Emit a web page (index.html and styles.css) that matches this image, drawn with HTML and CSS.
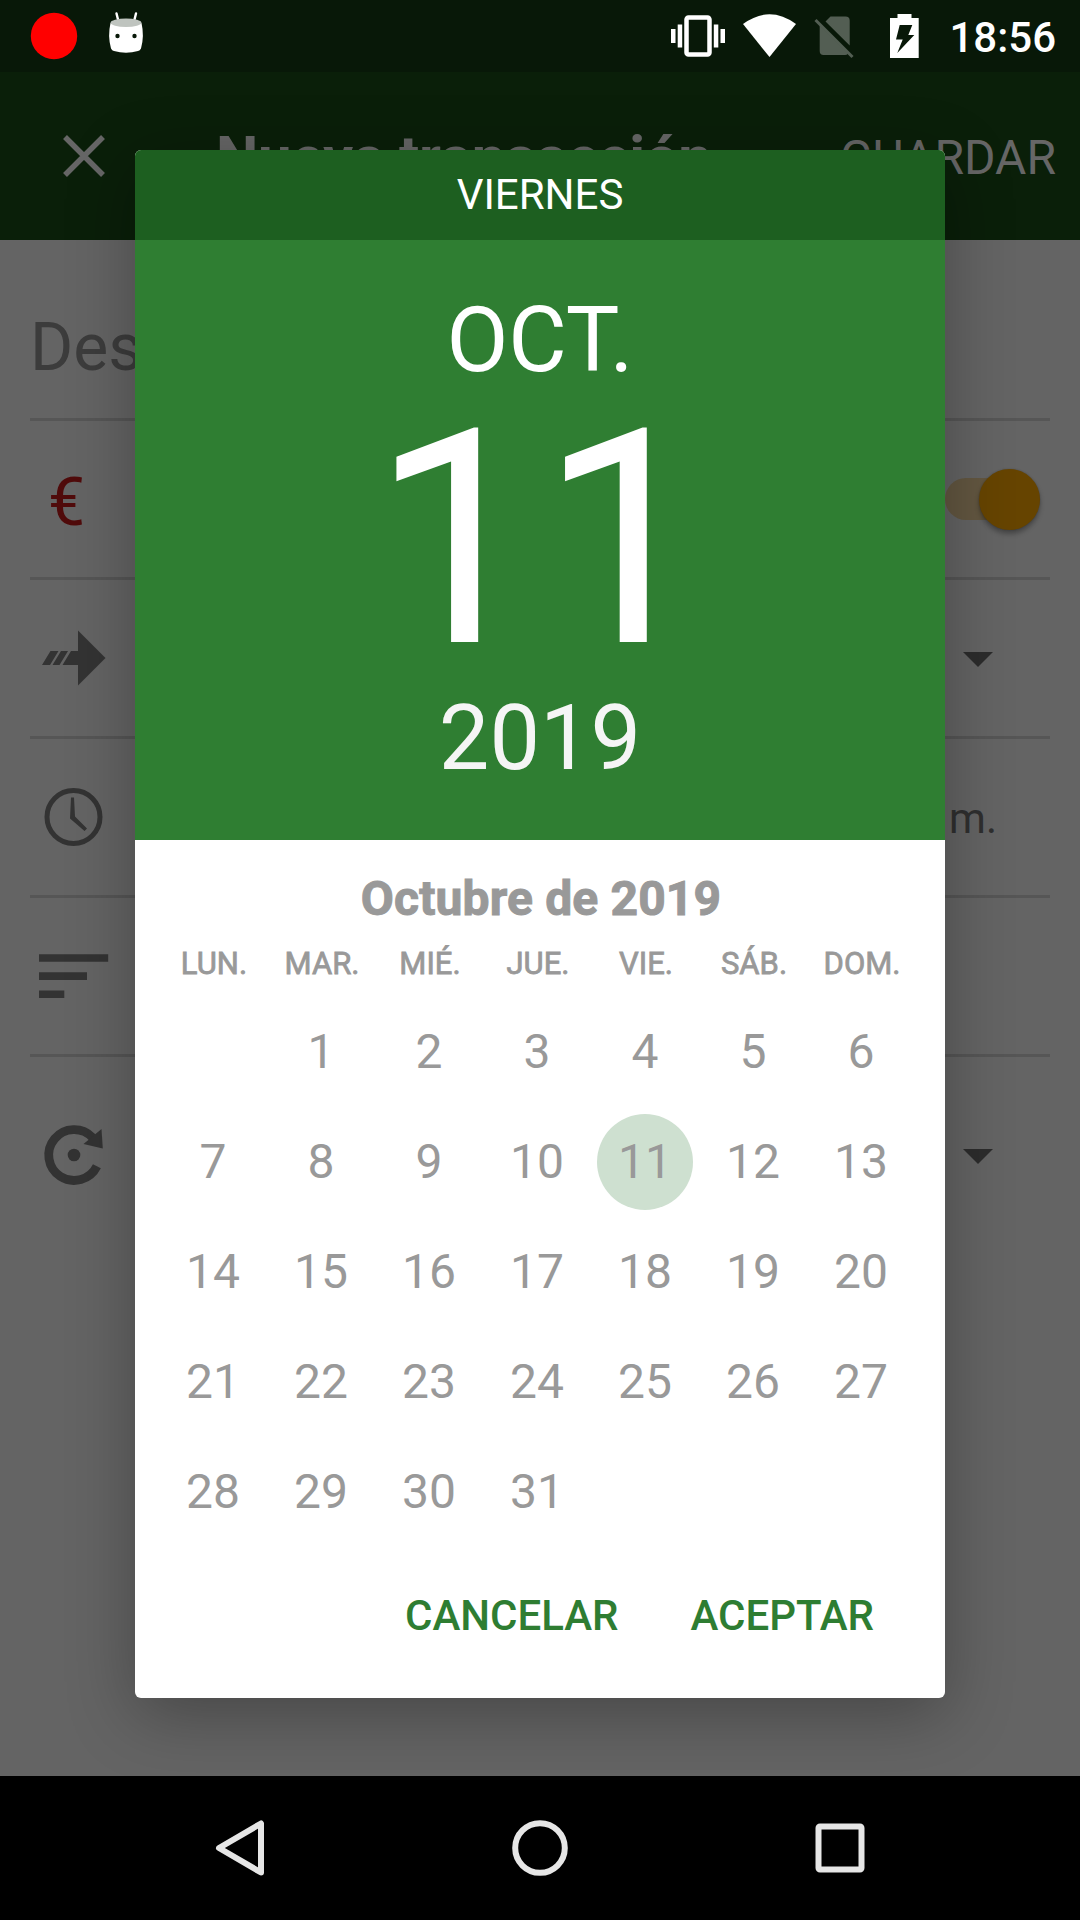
FILE: index.html
```html
<!DOCTYPE html>
<html lang="es">
<head>
<meta charset="utf-8">
<title>Nueva transacción</title>
<link rel="stylesheet" href="styles.css">
</head>
<body>
<div class="screen">
  <header class="status-bar">
    <svg class="status-left" viewBox="0 0 160 72">
      <circle cx="54" cy="36" r="23.2" fill="#f00"/>
      <path d="M116.500 13.500l2 8M136 13.500l-2 8" stroke="#fff" stroke-width="2.400" stroke-linecap="round"/>
      <path d="M110.500 23Q126 28 141.500 23Q144.500 36 141 48.500Q140 50.500 138 51Q126 54.500 114 51Q112 50.500 111 48.500Q107.500 36 110.500 23Z" fill="#fff"/>
      <ellipse cx="126" cy="22.700" rx="15.500" ry="4.200" fill="#bfc4bf"/>
      <circle cx="117.500" cy="36" r="2.200" fill="#081808"/>
      <circle cx="134.500" cy="36" r="2.200" fill="#081808"/>
    </svg>
    <svg class="status-right" viewBox="660 0 280 72">
      <rect x="686.500" y="17.500" width="23" height="37" rx="2" fill="none" stroke="#fff" stroke-width="4.500"/>
      <path d="M671 29h4.500v14h-4.500zM677.700 24.500h4.500v23h-4.500zM713.800 24.500h4.500v23h-4.500zM720.500 29h4.500v14h-4.500z" fill="#fff"/>
      <path d="M743 24Q769.500 4.500 796 24L769.500 57Z" fill="#fff"/>
      <path d="M830.500 16.500H845.500Q849.700 16.500 849.700 20.500V45.500L825.500 21.500ZM819.700 25.500L848 53.500Q847 55 845 55H823.500Q819.700 55 819.700 51Z" fill="#535e53"/>
      <path d="M815.500 20L852.500 57" stroke="#535e53" stroke-width="3"/>
      <path d="M897.500 14h14v4h7.200v40h-28.700v-40h7.500z" fill="#fff"/>
      <path d="M899.700 25H912.300L908.300 35H914.300L897.300 53L902.700 39.500H896Z" fill="#081808"/>
    </svg>
    <span class="status-time">18:56</span>
  </header>

  <div class="app-bar">
    <svg class="close" viewBox="0 0 44 44"><path d="M3 3L41 41M41 3L3 41" stroke="#666" stroke-width="5.500"/></svg>
    <h1 class="title">Nueva transacción</h1>
    <span class="save">GUARDAR</span>
  </div>

  <main class="form">
    <div class="row row-description">Descripción</div>
    <div class="row">
      <span class="euro">€</span>
      <span class="switch"><span class="thumb"></span></span>
    </div>
    <div class="row">
      <svg class="icon" viewBox="0 0 80 80"><path d="M48 12.500L75.500 40L48 67.500V47H32.500L41 33H48ZM20.500 33H28.500L20 47H12ZM31 33H38L29.500 47H22.500Z"/></svg>
      <svg class="caret" viewBox="0 0 30 15"><path d="M0 0H30L15 15Z"/></svg>
    </div>
    <div class="row">
      <svg class="icon" viewBox="0 0 80 80"><circle cx="43.500" cy="40" r="26.500" fill="none" stroke="#333" stroke-width="5"/><path d="M41 20.500H44L45 39.500L57 51.500L54.500 54L40 41.500Z"/></svg>
      <span class="time-value">p. m.</span>
    </div>
    <div class="row">
      <svg class="icon" viewBox="0 0 80 80"><path d="M9 18.300H78.200V25.800H9ZM9 36.300H57V44H9ZM9 54.500H34.300V62H9Z"/></svg>
    </div>
    <div class="row row-repeat">
      <svg class="icon" viewBox="0 0 80 80"><path d="M66.900 51.300A25.400 25.400 0 1 1 62.500 22.500" fill="none" stroke="#333" stroke-width="8.800"/><path d="M71.500 14L72.800 33.500L53.500 29Z"/><circle cx="44" cy="40" r="6.300"/></svg>
      <svg class="caret" viewBox="0 0 30 15"><path d="M0 0H30L15 15Z"/></svg>
    </div>
  </main>

  <nav class="nav-bar">
    <svg viewBox="0 0 60 60"><path d="M51 5.500V54.500L9 30Z" fill="none" stroke="#e6e6e6" stroke-width="6" stroke-linejoin="round"/></svg>
    <svg viewBox="0 0 60 60"><circle cx="30" cy="30" r="24.800" fill="none" stroke="#e6e6e6" stroke-width="6"/></svg>
    <svg viewBox="0 0 60 60"><rect x="8.500" y="8.500" width="43" height="43" rx="1.500" fill="none" stroke="#e6e6e6" stroke-width="6"/></svg>
  </nav>

  <section class="dialog">
    <div class="weekday">VIERNES</div>
    <div class="selected">
      <div class="month">OCT.</div>
      <div class="day">11</div>
      <div class="year">2019</div>
    </div>
    <div class="calendar">
      <h2 class="calendar-title">Octubre de 2019</h2>
      <div class="week week-names"><span>LUN.</span><span>MAR.</span><span>MIÉ.</span><span>JUE.</span><span>VIE.</span><span>SÁB.</span><span>DOM.</span></div>
      <div class="week"><span></span><span>1</span><span>2</span><span>3</span><span>4</span><span>5</span><span>6</span></div>
      <div class="week"><span>7</span><span>8</span><span>9</span><span>10</span><span class="current">11</span><span>12</span><span>13</span></div>
      <div class="week"><span>14</span><span>15</span><span>16</span><span>17</span><span>18</span><span>19</span><span>20</span></div>
      <div class="week"><span>21</span><span>22</span><span>23</span><span>24</span><span>25</span><span>26</span><span>27</span></div>
      <div class="week"><span>28</span><span>29</span><span>30</span><span>31</span><span></span><span></span><span></span></div>
    </div>
    <div class="actions"><span>CANCELAR</span><span>ACEPTAR</span></div>
  </section>
</div>
</body>
</html>
```
FILE: styles.css
```css
* { box-sizing: border-box; }

body {
  margin: 0;
  font-family: Roboto, "Noto Sans", sans-serif;
}

h1, h2 { margin: 0; }

.screen {
  position: relative;
  display: flex;
  flex-direction: column;
  width: 1080px;
  height: 1920px;
  overflow: hidden;
  background: #646464;
}

.status-bar {
  display: flex;
  align-items: center;
  height: 72px;
  padding-right: 24px;
  background: #081808;
  color: #fff;
}

.status-left { width: 160px; height: 72px; }
.status-right { width: 280px; height: 72px; margin-left: auto; }

.status-time {
  width: 116px;
  font-size: 42px;
  font-weight: 500;
  line-height: 72px;
  text-align: right;
  padding-top: 3px;
}

.app-bar {
  display: flex;
  align-items: center;
  height: 168px;
  padding: 0 24px 0 62px;
  background: #0a1f09;
  color: #666;
}

.close { width: 44px; height: 44px; }

.title {
  margin-left: 110px;
  font-size: 60px;
  font-weight: 700;
  line-height: 70px;
  letter-spacing: -.3px;
  padding-top: 4px;
  white-space: nowrap;
}

.save {
  margin-left: auto;
  font-size: 48px;
  line-height: 60px;
  padding-top: 3px;
}

.form {
  flex: 1;
  padding: 0 30px;
}

.row {
  display: flex;
  align-items: center;
  justify-content: space-between;
  height: 159px;
  border-bottom: 3px solid #565656;
}

.row-description {
  height: 181px;
  padding-top: 37px;
  font-size: 66px;
  color: #3c3c3c;
}

.row-repeat { height: 196px; border-bottom: 0; }

.euro {
  padding-left: 18px;
  padding-top: 7px;
  font-size: 66px;
  color: #500b0b;
}

.switch {
  width: 95px;
  height: 42px;
  margin-right: 10px;
  border-radius: 21px;
  background: #635741;
  display: flex;
  align-items: center;
  justify-content: flex-end;
}

.thumb {
  flex: none;
  width: 61px;
  height: 61px;
  border-radius: 50%;
  background: #664400;
  box-shadow: 0 4px 5px rgba(0, 0, 0, .3), 0 0 2px rgba(0, 0, 0, .2);
}

.icon { width: 80px; height: 80px; fill: #333; }

.caret {
  width: 30px;
  height: 15px;
  margin-top: 2px;
  margin-right: 57px;
  fill: #2c2c2c;
}

.time-value {
  margin-right: 53px;
  padding-top: 2px;
  font-size: 42px;
  color: #2f2f2f;
}

.nav-bar {
  display: flex;
  align-items: center;
  justify-content: space-between;
  height: 144px;
  padding: 0 210px;
  background: #000;
  z-index: 2;
}

.nav-bar svg { width: 60px; height: 60px; }

/* Modal date picker floating over the form */
.dialog {
  position: absolute;
  top: 150px;
  left: 135px;
  display: flex;
  flex-direction: column;
  width: 810px;
  height: 1548px;
  border-radius: 6px;
  overflow: hidden;
  background: #fff;
  color: #fff;
  box-shadow: 0 16px 68px rgba(0, 0, 0, .3);
}

.weekday {
  height: 90px;
  background: #1d5f20;
  font-size: 42px;
  line-height: 90px;
  text-align: center;
}

.selected {
  display: flex;
  flex-direction: column;
  justify-content: center;
  height: 600px;
  background: #2f7e32;
  text-align: center;
}

.month, .year { font-size: 90px; line-height: 100px; }
.month { padding-top: 1px; margin-bottom: -1px; }
.day { font-size: 300px; line-height: 300px; }
.year { color: #f5f5f5; margin: -1px 0 1px; }

.calendar {
  padding: 29px 27px 0;
  color: #999;
}

.calendar-title {
  padding-left: 2px;
  font-size: 48px;
  font-weight: 700;
  line-height: 60px;
  text-align: center;
  letter-spacing: .15px;
  -webkit-text-stroke: 1px #999;
}

.week {
  display: grid;
  grid-template-columns: repeat(7, 108px);
  height: 110px;
  margin-left: -3px;
  align-items: center;
  justify-items: center;
  font-size: 48px;
}

.week-names {
  height: 67px;
  padding-top: 2px;
  margin-left: -2px;
  font-size: 31px;
  -webkit-text-stroke: .8px #999;
}

.current {
  width: 96px;
  height: 96px;
  margin-top: 2px;
  border-radius: 50%;
  background: #cee0d0;
  line-height: 96px;
  text-align: center;
}

.actions {
  display: flex;
  justify-content: flex-end;
  gap: 72px;
  padding: 45px 71px 0 0;
  color: #2e7d32;
  font-size: 42px;
  font-weight: 500;
  line-height: 50px;
}
```
